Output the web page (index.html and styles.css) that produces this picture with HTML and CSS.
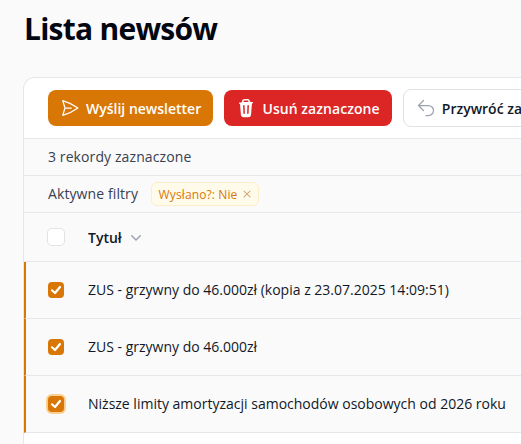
FILE: index.html
```html
<!DOCTYPE html>
<html lang="pl">
<head>
    <meta charset="UTF-8">
    <title>Lista newsów</title>
    <link rel="stylesheet" href="styles.css">
</head>
<body>
    <h1 class="page-title">Lista newsów</h1>

    <div class="card">
        <div class="toolbar">
            <button class="btn btn-orange">
                <svg class="btn-icon" viewBox="0 0 24 24" fill="none" stroke="currentColor" stroke-width="1.5" stroke-linecap="round" stroke-linejoin="round"><path d="M6 12 3.27 3.13A59.77 59.77 0 0 1 21.49 12 59.77 59.77 0 0 1 3.27 20.88L6 12Zm0 0h7.5"/></svg>
                Wyślij newsletter
            </button>
            <button class="btn btn-red">
                <svg class="btn-icon" viewBox="0 0 20 20" fill="currentColor"><path fill-rule="evenodd" clip-rule="evenodd" d="M8.75 1A2.75 2.75 0 0 0 6 3.75v.44c-.8.08-1.57.18-2.35.31a.75.75 0 1 0 .25 1.48l.15-.03.9 11.3A2.75 2.75 0 0 0 7.69 19.3h4.62a2.75 2.75 0 0 0 2.74-2.53l.9-11.34.15.03a.75.75 0 1 0 .25-1.48c-.78-.13-1.56-.23-2.35-.31v-.44A2.75 2.75 0 0 0 11.25 1h-2.5ZM10 4c.84 0 1.67.03 2.5.08v-.33c0-.69-.56-1.25-1.25-1.25h-2.5c-.69 0-1.25.56-1.25 1.25v.33C8.33 4.03 9.16 4 10 4ZM8.58 7.72a.75.75 0 0 0-1.5.06l.3 7.5a.75.75 0 1 0 1.5-.06l-.3-7.5Zm4.34.06a.75.75 0 1 0-1.5-.06l-.3 7.5a.75.75 0 1 0 1.5.06l.3-7.5Z"/></svg>
                Usuń zaznaczone
            </button>
            <button class="btn btn-white">
                <svg class="btn-icon" viewBox="0 0 24 24" fill="none" stroke="currentColor" stroke-width="1.5" stroke-linecap="round" stroke-linejoin="round"><path d="M9 15 3 9m0 0 6-6M3 9h12a6 6 0 0 1 0 12h-3"/></svg>
                <span class="btn-dark-text">Przywróć zaznaczone</span>
            </button>
        </div>

        <div class="info-row"><span class="info-text">3 rekordy zaznaczone</span></div>

        <div class="info-row filters-row">
            <span class="info-text">Aktywne filtry</span>
            <span class="badge">
                Wysłano?: Nie
                <svg class="badge-x" viewBox="0 0 20 20" fill="currentColor"><path d="M6.28 5.22a.75.75 0 0 0-1.06 1.06L8.94 10l-3.72 3.72a.75.75 0 1 0 1.06 1.06L10 11.06l3.72 3.72a.75.75 0 1 0 1.06-1.06L11.06 10l3.72-3.72a.75.75 0 0 0-1.06-1.06L10 8.94 6.28 5.22Z"/></svg>
            </span>
        </div>

        <div class="table-head">
            <span class="check-cell"><span class="checkbox"></span></span>
            <span class="head-title">Tytuł</span>
            <svg class="chevron" viewBox="0 0 20 20" fill="currentColor"><path fill-rule="evenodd" clip-rule="evenodd" d="M5.22 8.22a.75.75 0 0 1 1.06 0L10 11.94l3.72-3.72a.75.75 0 1 1 1.06 1.06l-4.25 4.25a.75.75 0 0 1-1.06 0L5.22 9.28a.75.75 0 0 1 0-1.06Z"/></svg>
        </div>

        <div class="table-row">
            <span class="check-cell"><span class="checkbox checked"><svg viewBox="0 0 16 16" fill="none" stroke="#fff" stroke-width="2.2" stroke-linecap="round" stroke-linejoin="round"><path d="M4 8.3 7 11l5-6"/></svg></span></span>
            <span class="row-text">ZUS - grzywny do 46.000zł (kopia z 23.07.2025 14:09:51)</span>
        </div>
        <div class="table-row">
            <span class="check-cell"><span class="checkbox checked"><svg viewBox="0 0 16 16" fill="none" stroke="#fff" stroke-width="2.2" stroke-linecap="round" stroke-linejoin="round"><path d="M4 8.3 7 11l5-6"/></svg></span></span>
            <span class="row-text">ZUS - grzywny do 46.000zł</span>
        </div>
        <div class="table-row">
            <span class="check-cell"><span class="checkbox checked focused"><svg viewBox="0 0 16 16" fill="none" stroke="#fff" stroke-width="2.2" stroke-linecap="round" stroke-linejoin="round"><path d="M4 8.3 7 11l5-6"/></svg></span></span>
            <span class="row-text">Niższe limity amortyzacji samochodów osobowych od 2026 roku</span>
        </div>
        <div class="card-rest"></div>
    </div>
</body>
</html>
```

FILE: styles.css
```css
html, body {
    height: 444px;
    overflow: hidden;
}

body {
    margin: 0;
    padding: 0 0 0 24px;
    width: 497px;
    font-family: "Open Sans", sans-serif;
    font-size: 14px;
    color: #111827;
    background-color: #fafafa;
}

.page-title {
    margin: 0;
    padding-top: 9px;
    height: 77px;
    box-sizing: border-box;
    font-size: 30px;
    line-height: 40px;
    font-weight: 700;
    letter-spacing: -0.75px;
    color: #030712;
}

.card {
    width: 700px;
    border: 1px solid #e5e7eb;
    border-right: none;
    border-top-left-radius: 12px;
    background: white;
    margin-left: -1px;
}

.toolbar {
    display: flex;
    align-items: center;
    gap: 11.25px;
    height: 61px;
    padding: 0 24px;
    border-top-left-radius: 12px;
    border-bottom: 1px solid #e5e7eb;
    box-sizing: border-box;
}

.btn {
    display: flex;
    align-items: center;
    gap: 6px;
    height: 36px;
    padding: 0 12px;
    border: none;
    border-radius: 8px;
    font-family: inherit;
    font-size: 14px;
    font-weight: 600;
    white-space: nowrap;
}

.btn-icon {
    width: 20px;
    height: 20px;
    flex: none;
}

.btn-orange {
    background-color: #d97706;
    color: white;
}

.btn-red {
    background-color: #dc2626;
    color: white;
    letter-spacing: 0.05px;
}

.btn-white {
    height: 38px;
    background: white;
    color: #9ca3af;
    border: 1px solid #e0e2e6;
}

.btn-dark-text {
    color: #111827;
}

.info-row {
    display: flex;
    align-items: center;
    height: 37px;
    padding: 0 24px;
    box-sizing: border-box;
    background-color: #fafafa;
    border-bottom: 1px solid #e5e7eb;
    color: #374151;
}

.info-text {
    margin-bottom: 2px;
    letter-spacing: 0.1px;
}

.filters-row {
    gap: 12.5px;
}

.badge {
    display: flex;
    align-items: center;
    gap: 3px;
    height: 24px;
    padding: 0 4px 0 7px;
    box-sizing: border-box;
    border: 1px solid #fdeec8;
    border-radius: 6px;
    background-color: #fffbeb;
    color: #d97706;
    font-size: 12px;
    font-weight: 500;
    letter-spacing: 0.12px;
}

.badge-x {
    width: 14px;
    height: 14px;
    color: #d6a878;
}

.table-head {
    display: flex;
    align-items: center;
    height: 49px;
    background-color: #fafafa;
    border-bottom: 1px solid #e5e7eb;
    box-sizing: border-box;
}

.check-cell {
    display: flex;
    justify-content: center;
    width: 64px;
    flex: none;
}

.head-title {
    font-weight: 600;
    color: #111827;
}

.chevron {
    width: 20px;
    height: 20px;
    margin-left: 4px;
    color: #9ca3af;
}

.table-row {
    display: flex;
    align-items: center;
    height: 57px;
    box-sizing: border-box;
    background-color: #fafafa;
    border-left: 2px solid #d97706;
    border-bottom: 1px solid #e5e7eb;
    color: #111827;
}

.table-row .check-cell {
    width: 60px;
    margin-right: 2px;
}

.row-text {
    margin-bottom: 2px;
}

.checkbox {
    display: block;
    width: 16px;
    height: 16px;
    border-radius: 4px;
    background: white;
    box-shadow: 0 0 0 1px #e0e2e6;
}

.checked {
    background-color: #d97706;
    box-shadow: none;
}

.checked svg {
    display: block;
}

.focused {
    box-shadow: 0 0 0 2px #fbcf8e;
}

.card-rest {
    height: 60px;
    background: white;
}
```
